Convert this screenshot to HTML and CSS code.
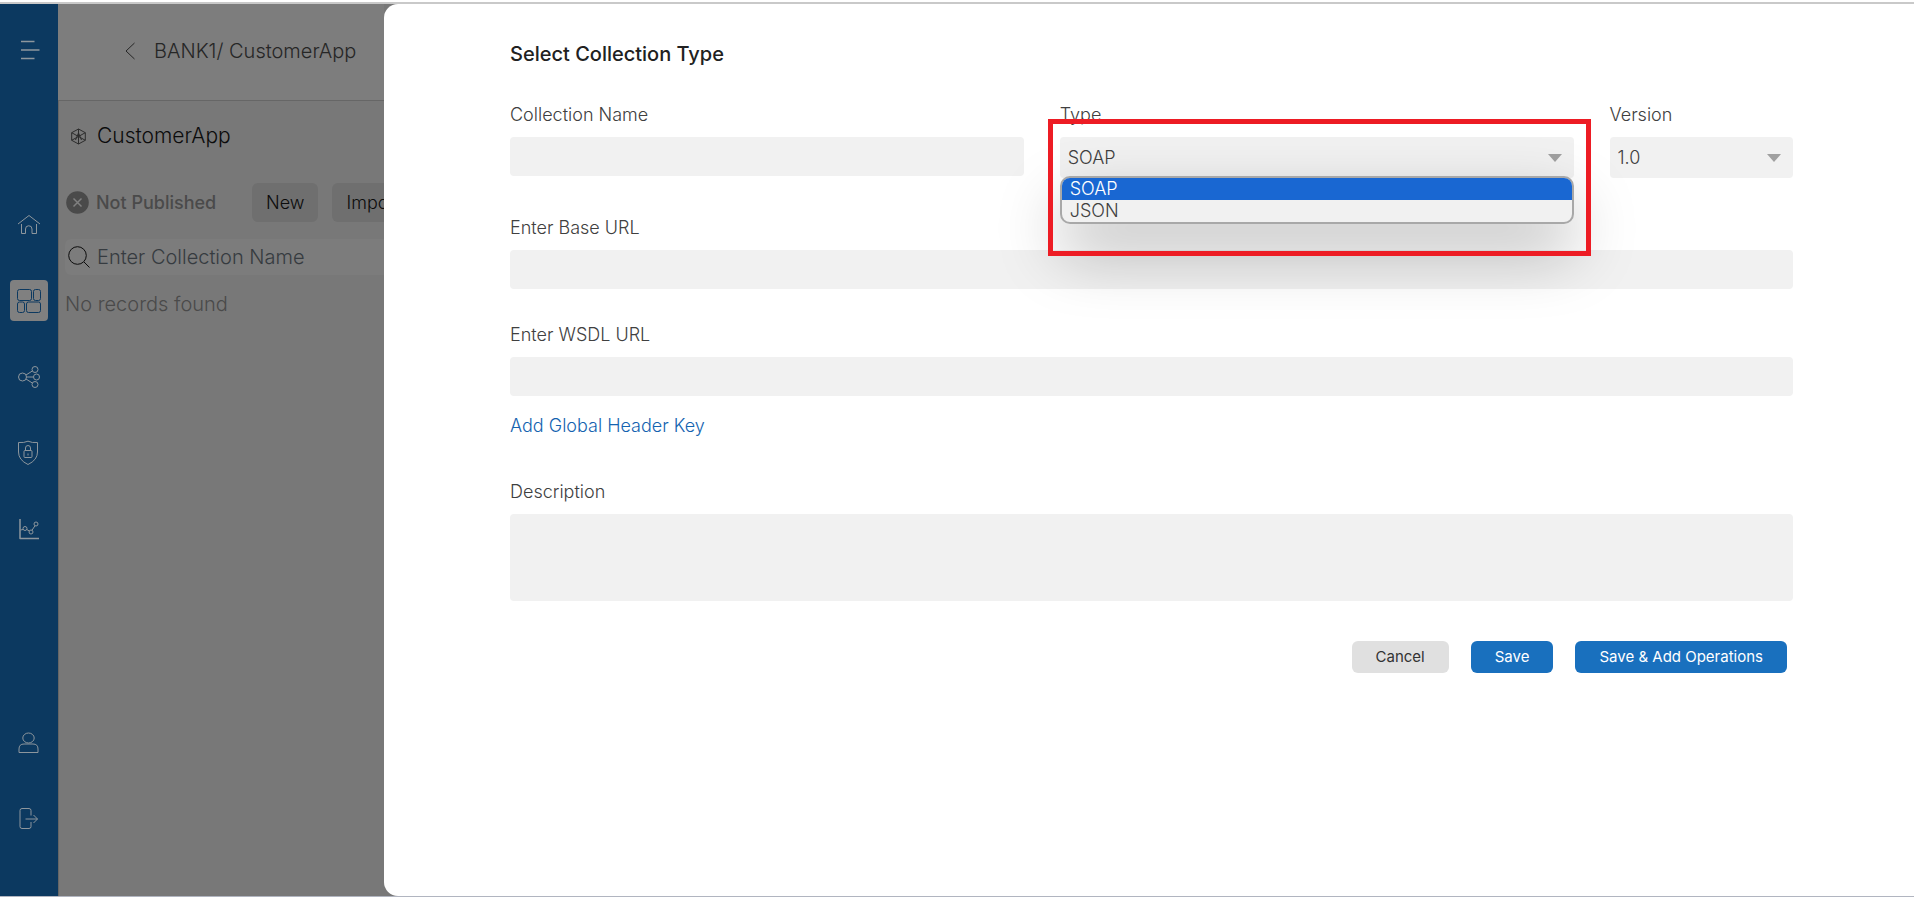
FILE: index.html
```html
<!DOCTYPE html>
<html lang="en">
<head>
<meta charset="utf-8">
<title>CustomerApp</title>
<link rel="stylesheet" href="styles.css">
</head>
<body>
<div class="app">
  <nav class="sidebar" aria-label="Main">
    <button class="nav-item nav-menu" type="button" aria-label="Menu">
      <svg width="24" height="24" viewBox="0 0 24 24"><path d="M4 3.500h13.500M4 12h18.500M4 20.500h13.500" stroke-width="1.500"/></svg>
    </button>
    <a class="nav-item" href="#" aria-label="Home">
      <svg width="24" height="24" viewBox="0 0 24 24"><path d="M1 11 12 2.500 23 11M4.500 11v9.500h4V16a3 3 0 0 1 6.500 0v4.500h4.500V11"/></svg>
    </a>
    <a class="nav-item nav-active" href="#" aria-label="Collections">
      <svg width="26" height="26" viewBox="0 0 26 26"><rect x="1.500" y="1.500" width="14" height="11" rx="2"/><rect x="17.500" y="1.500" width="7" height="11" rx="2"/><rect x="1.500" y="14" width="7" height="10.500" rx="2"/><rect x="10.500" y="14" width="14" height="10.500" rx="2"/></svg>
    </a>
    <a class="nav-item" href="#" aria-label="Integrations">
      <svg width="24" height="24" viewBox="0 0 24 24"><circle cx="5.500" cy="12" r="4"/><circle cx="18" cy="4.500" r="3"/><circle cx="19.500" cy="12" r="3"/><circle cx="18" cy="19.500" r="3"/><path d="m9 10 6.300-4M9.500 12h7M9 14l6.300 4"/></svg>
    </a>
    <a class="nav-item" href="#" aria-label="Security">
      <svg width="24" height="26" viewBox="0 0 24 26"><path d="M1.500 2.500Q7 3 11 1.200 15 3 20.500 2.500V12q0 8-9.500 12.500Q1.500 20 1.500 12Z"/><rect x="7" y="10.500" width="8" height="7" rx="1"/><path d="M8.500 10.500V8a2.500 2.500 0 0 1 5 0v2.500M11 13.500v2"/></svg>
    </a>
    <a class="nav-item" href="#" aria-label="Analytics">
      <svg width="24" height="24" viewBox="0 0 24 24"><path d="M3 2v19.500h19" stroke-width="1.500"/><circle cx="8" cy="11.500" r="2"/><circle cx="14" cy="15" r="2"/><circle cx="19" cy="7" r="2"/><path d="m3.500 13 2.500-.5M9.800 12.500l2.500 1.500M15 13.200l3-4.400"/></svg>
    </a>
    <a class="nav-item nav-bottom" href="#" aria-label="Profile">
      <svg width="24" height="24" viewBox="0 0 24 24"><ellipse cx="11.500" cy="7" rx="5.700" ry="5"/><path d="M2 21.500V18q0-5 5-5h9q5 0 5 5v3.500Z"/></svg>
    </a>
    <a class="nav-item" href="#" aria-label="Log out">
      <svg width="24" height="24" viewBox="0 0 24 24"><path d="M14 8.500V3.500q0-2-2-2H5q-2 0-2 2v16q0 2 2 2h7q2 0 2-2v-4.500M8.500 12H20.500M16.500 8l4 4-4 4"/></svg>
    </a>
  </nav>

  <section class="workspace">
    <header class="crumbs">
      <a class="back" href="#" aria-label="Back"><svg width="12" height="18" viewBox="0 0 12 18"><path d="M10.500 1 2 9l8.500 8"/></svg></a>
      <span>BANK1/ CustomerApp</span>
    </header>
    <div class="collections">
      <h1 class="app-name">
        <svg width="17" height="17" viewBox="0 0 17 17"><path d="m8.500 1 6.800 3.700v7.600L8.500 16l-6.800-3.700V4.700ZM8.500 1v15M1.700 4.700l13.600 7.600M15.300 4.700 1.700 12.300M5.500 12l3-7 3 7"/></svg>
        CustomerApp
      </h1>
      <div class="status-row">
        <span class="status"><svg width="23" height="23" viewBox="0 0 23 23"><circle cx="11.500" cy="11.500" r="11.300"/><path d="m7.500 7.500 8 8m0-8-8 8"/></svg>Not Published</span>
        <button class="tool" type="button">New</button>
        <button class="tool" type="button">Import</button>
      </div>
      <div class="search">
        <svg width="24" height="24" viewBox="0 0 24 24"><circle cx="10.500" cy="10.500" r="8.800"/><path d="m17 17 5.500 5.500"/></svg>
        <input type="search" placeholder="Enter Collection Name" aria-label="Enter Collection Name">
      </div>
      <p class="empty">No records found</p>
    </div>
  </section>

  <main class="backdrop">
    <form class="sheet">
      <h2 class="title">Select Collection Type</h2>
      <div class="row">
        <div class="field">
          <label for="name">Collection Name</label>
          <input class="control" id="name" type="text">
        </div>
        <div class="field type-field">
          <label for="type">Type</label>
          <select class="control select" id="type"><option>SOAP</option><option>JSON</option></select>
          <ul class="menu" role="listbox" aria-label="Type">
            <li class="selected" role="option" aria-selected="true">SOAP</li>
            <li role="option" aria-selected="false">JSON</li>
          </ul>
          <div class="highlight"></div>
        </div>
        <div class="field">
          <label for="version">Version</label>
          <select class="control select" id="version"><option>1.0</option></select>
        </div>
      </div>
      <div class="field base-url">
        <label for="base">Enter Base URL</label>
        <input class="control" id="base" type="text">
      </div>
      <div class="field wsdl">
        <label for="wsdl">Enter WSDL URL</label>
        <input class="control" id="wsdl" type="text">
      </div>
      <a class="add-header" href="#">Add Global Header Key</a>
      <div class="field description">
        <label for="desc">Description</label>
        <textarea class="control area" id="desc"></textarea>
      </div>
      <div class="actions">
        <button class="btn btn-plain" type="button">Cancel</button>
        <button class="btn" type="button">Save</button>
        <button class="btn" type="button">Save &amp; Add Operations</button>
      </div>
    </form>
  </main>
</div>
</body>
</html>
```

FILE: styles.css
```css
* { box-sizing: border-box; }

body {
  margin: 0;
  padding-top: 2px;
  background: #fff;
  color: #404040;
  font: 300 18px/24px Inter, "Liberation Sans", sans-serif;
}

h1, h2, p, ul { margin: 0; padding: 0; }
ul { list-style: none; }
a { color: inherit; text-decoration: none; }
svg { display: block; flex: none; fill: none; stroke: currentColor; stroke-linejoin: round; }
button, input, select, textarea { font: inherit; color: inherit; border: 0; }

.app {
  display: grid;
  grid-template-columns: 58px 326px minmax(0, 1fr);
  min-height: calc(100vh - 2px);
  border-top: 2px solid #c9c9c9;
  border-bottom: 1px solid #b1b5c0;
}

/* Sidebar */
.sidebar {
  display: flex;
  flex-direction: column;
  align-items: center;
  gap: 35px;
  padding: 25px 0 57px;
  background: #0c3960;
  color: #8d969d;
}
.nav-item {
  display: flex;
  align-items: center;
  justify-content: center;
  width: 38px;
  height: 41px;
  padding: 0;
  border-radius: 4px;
  background: none;
}
.nav-menu { margin-bottom: 99px; }
.nav-active { background: #808080; color: #0c3960; }
.nav-bottom { margin-top: auto; }

/* Workspace */
.workspace { overflow: hidden; background: #787878; }
.crumbs {
  display: flex;
  align-items: center;
  gap: 18px;
  height: 97px;
  padding: 0 0 2px 66px;
  border-bottom: 1px solid #666;
  background: #7d7d7d;
  color: #262626;
  font-size: 20px;
}
.collections {
  height: calc(100% - 97px);
  padding: 19px 0 0 6px;
  border-left: 1px solid #666;
}
.app-name {
  display: flex;
  align-items: center;
  gap: 10px;
  height: 32px;
  padding-left: 5px;
  color: #0c0c0c;
  font-size: 21px;
  font-weight: 300;
}
.app-name svg { color: #2c2c2c; }
.status-row { display: flex; align-items: center; gap: 14px; margin-top: 31px; }
.status {
  display: flex;
  flex: none;
  align-items: center;
  gap: 7px;
  width: 173px;
  padding-left: 1px;
  color: #4a4a4a;
  font-weight: 500;
}
.status circle { fill: #4a4a4a; stroke: none; }
.status path { stroke: #808080; stroke-width: 1.5; }
.tool {
  flex: none;
  height: 39px;
  padding: 0 14px;
  border-radius: 6px;
  background: #6f6f6f;
  color: #0c0c0c;
}
.search {
  display: flex;
  align-items: center;
  gap: 6px;
  height: 36px;
  margin-top: 17px;
  padding-left: 2px;
  border-radius: 6px 0 0 6px;
  background: #7c7c7c;
  color: #0c0c0c;
  font-size: 20px;
}
.search input { flex: 1; min-width: 0; padding: 0; background: none; outline: 0; }
.search input::placeholder { color: #363b40; opacity: 1; }
.empty { margin-top: 17px; color: #4a4a4a; font-size: 20px; }

/* Sheet */
.backdrop { background: #787878; }
.sheet {
  height: 100%;
  padding: 38px 121px 40px 126px;
  border-radius: 14px 0 0 14px;
  background: #fff;
}
.title { color: #212121; font-size: 20px; font-weight: 500; line-height: 24px; }
.row {
  display: grid;
  grid-template-columns: 14fr 14fr 5fr;
  gap: 36px;
  margin-top: 37px;
}
.field { display: flex; flex-direction: column; gap: 10px; min-width: 0; }
.type-field { position: relative; }
.control {
  display: block;
  width: 100%;
  height: 39px;
  padding: 0 8px;
  border-radius: 4px;
  background: #f1f1f1;
  outline: 0;
}
.select {
  height: 41px;
  appearance: none;
  background: #f1f1f1 url("data:image/svg+xml,%3Csvg xmlns='http://www.w3.org/2000/svg' width='14' height='8'%3E%3Cpath d='M0 0h14L7 8z' fill='%23a0a0a0'/%3E%3C/svg%3E") no-repeat right 12px center;
}
.menu {
  position: absolute;
  z-index: 1;
  top: 73px;
  right: 0;
  left: 0;
  overflow: hidden;
  border: 2px solid #a8a8a8;
  border-radius: 10px;
  background: #f1f1f1;
  box-shadow: 0 28px 64px rgba(0, 0, 0, 0.28);
}
.menu li { padding: 0 8px; line-height: 22px; }
.menu .selected { background: #1967d2; color: #fff; }
.highlight {
  position: absolute;
  z-index: 2;
  top: 16px;
  right: -17px;
  left: -12px;
  height: 137px;
  border: 5px solid #ed1c24;
  pointer-events: none;
}
.base-url { margin-top: 38px; }
.wsdl { margin-top: 34px; }
.add-header { display: block; width: max-content; margin-top: 18px; color: #1463b0; }
.description { margin-top: 42px; }
.area { height: 87px; padding: 8px; resize: none; }
.actions { display: flex; justify-content: flex-end; gap: 22px; margin-top: 40px; padding-right: 6px; }
.btn {
  height: 32px;
  padding: 0 24px;
  border-radius: 6px;
  background: #1970be;
  color: #fff;
  font-size: 15px;
  font-weight: 400;
}
.btn-plain { background: #e0e0e0; color: #333; }
```
